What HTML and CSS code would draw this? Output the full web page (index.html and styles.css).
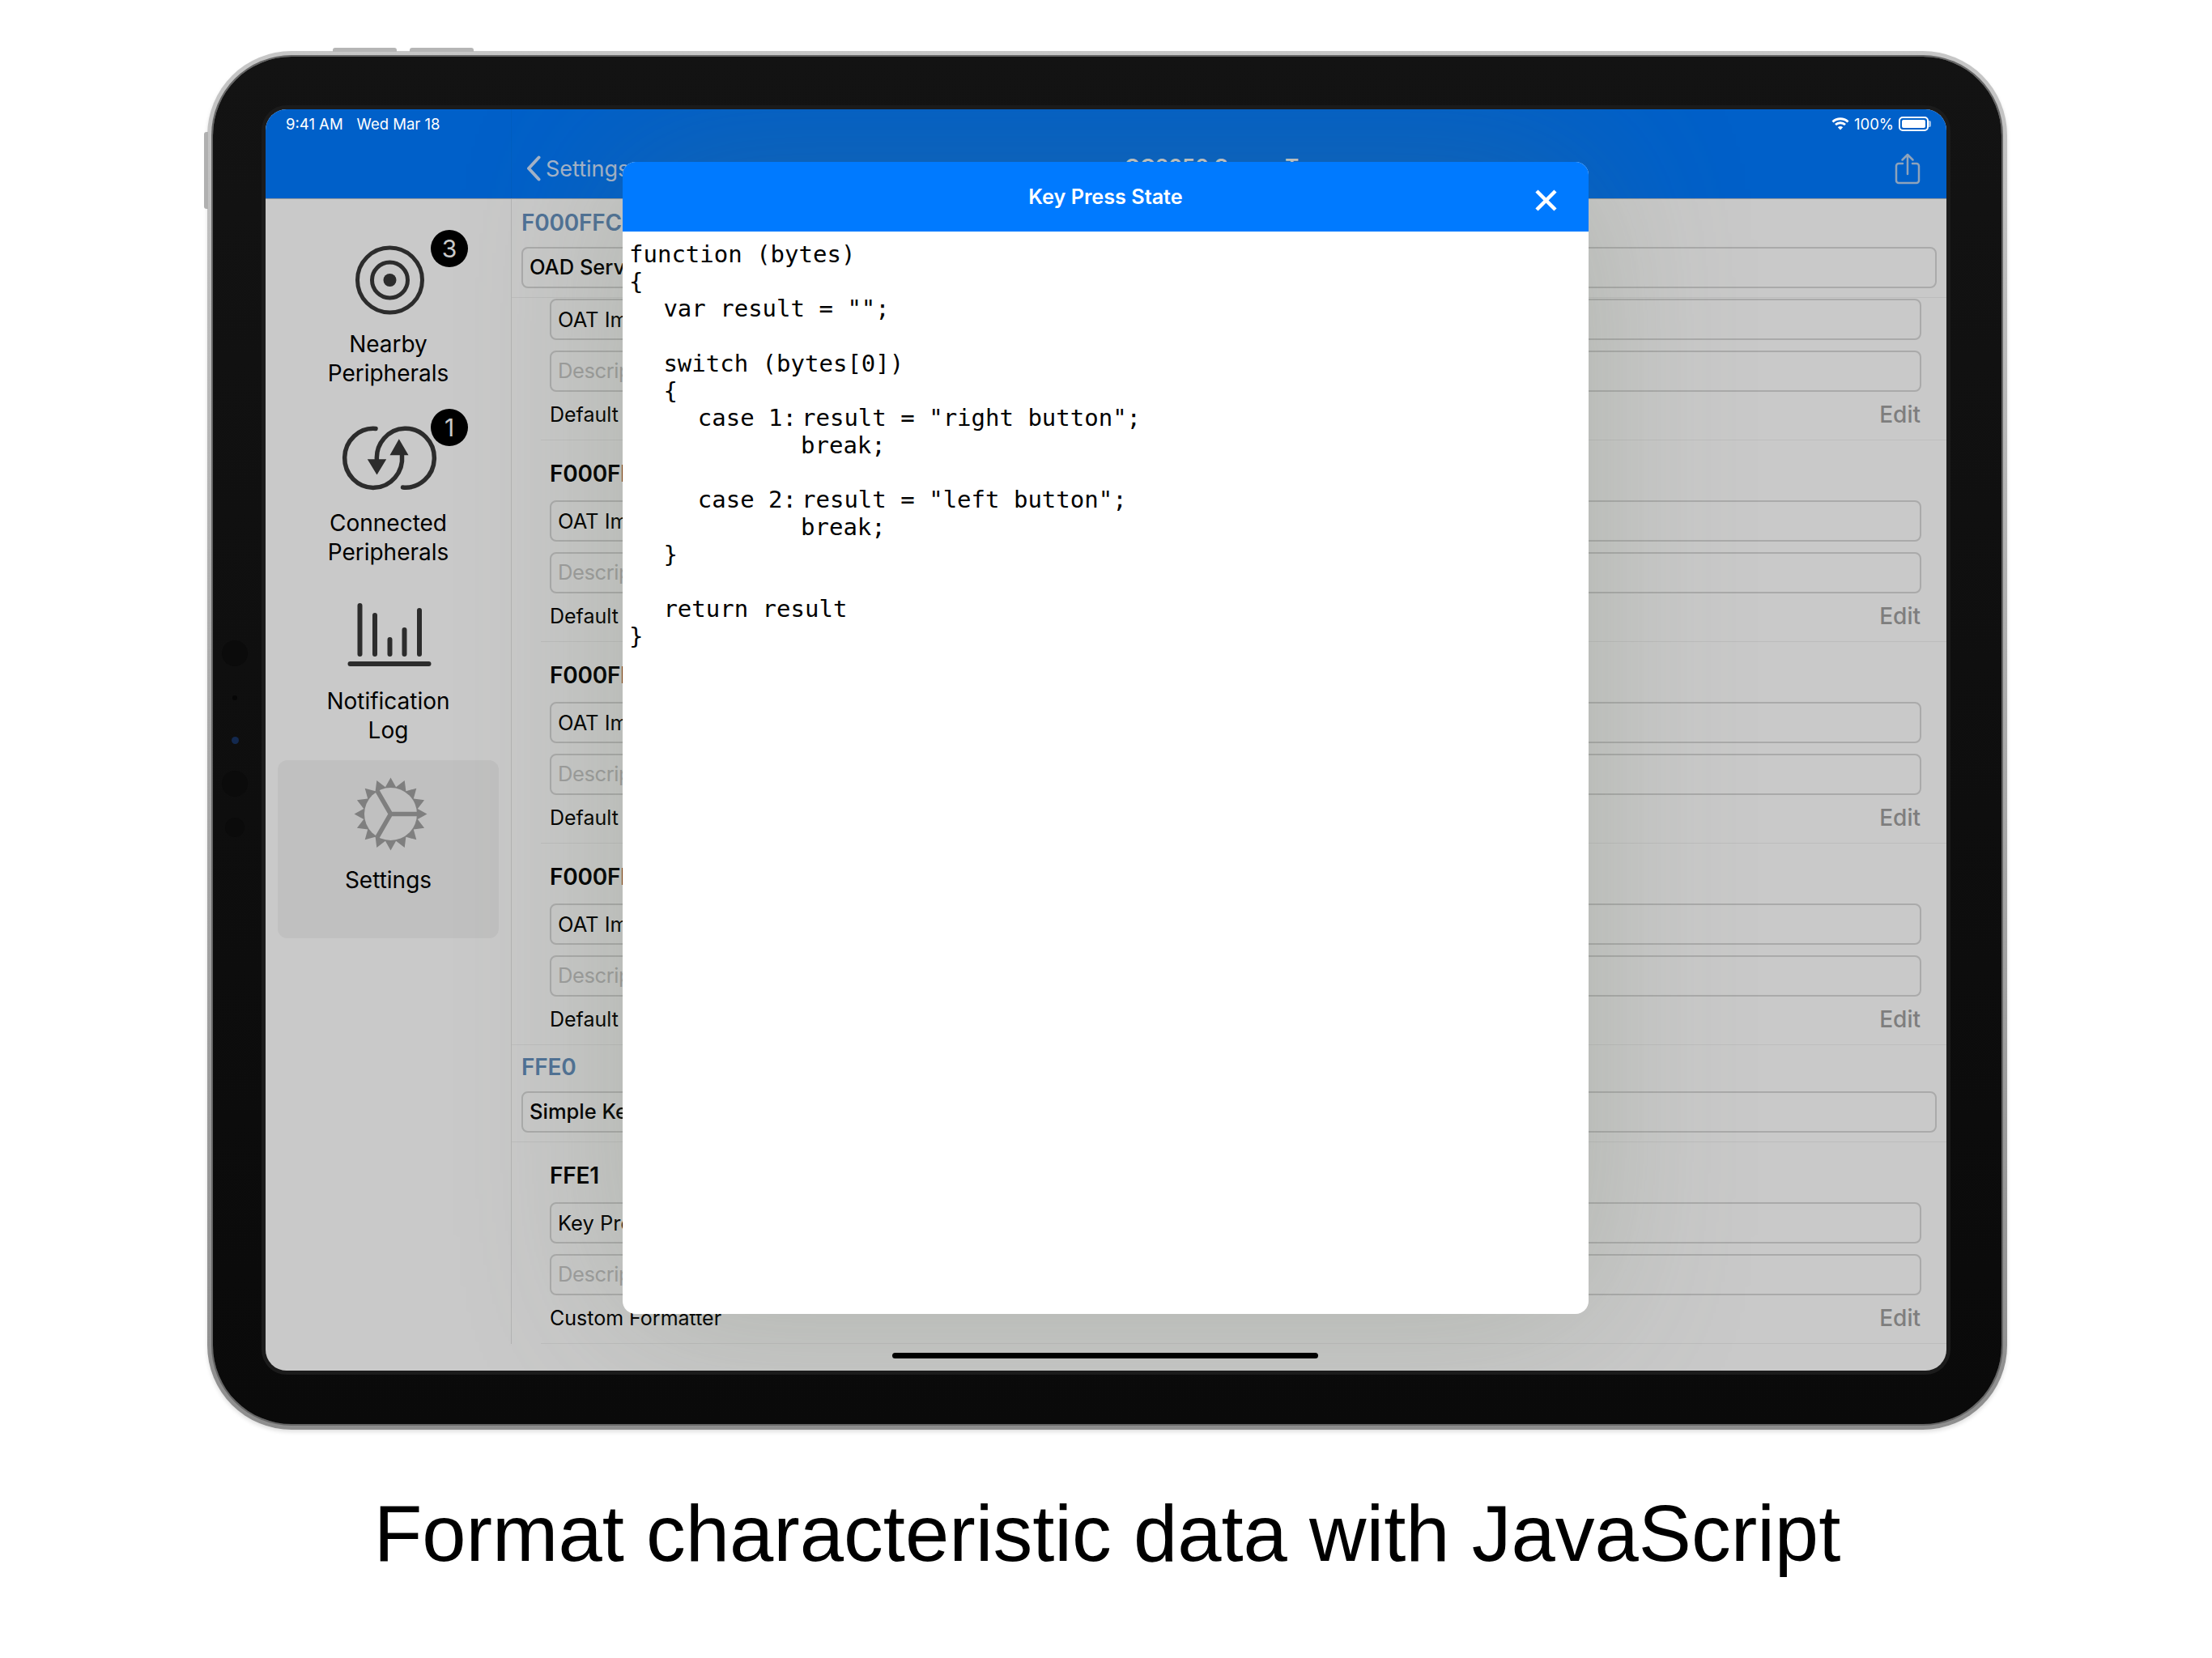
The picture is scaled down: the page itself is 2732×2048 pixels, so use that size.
FILE: index.html
```html
<!DOCTYPE html>
<html lang="en">
<head>
<meta charset="utf-8">
<title>Format characteristic data with JavaScript</title>
<link rel="stylesheet" href="styles.css">
</head>
<body>
<main class="page">
  <div class="device">
    <span class="hw-top hw-top-a"></span>
    <span class="hw-top hw-top-b"></span>
    <span class="hw-side"></span>
    <div class="bezel">
      <div class="sensors">
        <span class="sensor sensor-lg"></span>
        <span class="sensor sensor-dot"></span>
        <span class="sensor sensor-cam"></span>
        <span class="sensor sensor-lg2"></span>
        <span class="sensor sensor-md"></span>
      </div>
      <div class="screen">
        <header class="nav">
          <div class="nav-left"></div>
          <div class="nav-right">
            <div class="back">
              <svg class="chevron" viewBox="0 0 18 32"><path d="M15.5 2.5 3 16l12.500 13.500"/></svg>
              <span>Settings</span>
            </div>
            <div class="nav-title">CC2650 SensorTag</div>
            <svg class="share" viewBox="2340 187 32 40"><path d="M2350 201h-5a3 3 0 0 0-3 3v18a3 3 0 0 0 3 3h22a3 3 0 0 0 3-3v-18a3 3 0 0 0-3-3h-5M2356 190v24M2349.500 196.500l6.500-6.500 6.500 6.500"/></svg>
          </div>
        </header>
        <div class="content">
          <aside class="sidebar">
            <div class="tab">
              <svg class="tab-icon" viewBox="399.5 298 160 96">
                <circle class="stroke" cx="481" cy="346" r="40"/>
                <circle class="stroke" cx="481" cy="346" r="22"/>
                <circle class="solid" cx="481" cy="346" r="8"/>
              </svg>
              <div class="tab-label">Nearby<br>Peripherals</div>
              <span class="badge">3</span>
            </div>
            <div class="tab">
              <svg class="tab-icon" viewBox="399.5 518.500 160 96">
                <path class="stroke round thick" d="M463.500 529A35.500 36.500 0 1 0 496 562"/>
                <path class="stroke round thick" d="M497 601.500A35.500 36.500 0 1 0 465 568.500"/>
                <path class="solid" d="M492.300 541.700 504 561.700H481ZM453.300 566.700H476.700L465 586Z"/>
              </svg>
              <div class="tab-label">Connected<br>Peripherals</div>
              <span class="badge">1</span>
            </div>
            <div class="tab">
              <svg class="tab-icon" viewBox="399.5 739 160 96">
                <path class="stroke round bars" d="M444 748v60M462.500 760v48M481 790v18M499 778v30M517.500 754v54M432 820h97"/>
              </svg>
              <div class="tab-label">Notification<br>Log</div>
            </div>
            <div class="tab tab-active">
              <svg class="tab-icon" viewBox="399.5 959.500 160 96">
                <g transform="translate(482 1005)">
                  <polygon class="gear" points="45,0 33.300,6.600 41.600,17.200 28.300,18.900 31.800,31.800 18.900,28.300 17.200,41.600 6.600,33.300 0,45 -6.600,33.300 -17.200,41.600 -18.900,28.300 -31.800,31.800 -28.300,18.900 -41.600,17.200 -33.300,6.600 -45,0 -33.300,-6.600 -41.600,-17.200 -28.300,-18.900 -31.800,-31.800 -18.900,-28.300 -17.200,-41.600 -6.600,-33.300 0,-45 6.600,-33.300 17.200,-41.600 18.900,-28.300 31.800,-31.800 28.300,-18.900 41.600,-17.200 33.300,-6.600"/>
                  <circle class="gear-face" r="32.500"/>
                  <path class="gear-spokes" d="M0 0H33M0 0-16.500-28.500M0 0-16.500 28.500"/>
                </g>
              </svg>
              <div class="tab-label">Settings</div>
            </div>
          </aside>
          <section class="list">
            <div class="service service-first">
              <h2 class="service-id">F000FFC0</h2>
              <div class="field field-strong">OAD Service</div>
            </div>
            <div class="char char-bare">
              <div class="field">OAT Image Identify</div>
              <div class="field field-hint">Description</div>
              <div class="meta"><span>Default</span><span class="edit">Edit</span></div>
            </div>
            <div class="char">
              <h3 class="char-id">F000FFC2</h3>
              <div class="field">OAT Image Block</div>
              <div class="field field-hint">Description</div>
              <div class="meta"><span>Default</span><span class="edit">Edit</span></div>
            </div>
            <div class="char">
              <h3 class="char-id">F000FFC3</h3>
              <div class="field">OAT Image Count</div>
              <div class="field field-hint">Description</div>
              <div class="meta"><span>Default</span><span class="edit">Edit</span></div>
            </div>
            <div class="char char-last">
              <h3 class="char-id">F000FFC4</h3>
              <div class="field">OAT Image Status</div>
              <div class="field field-hint">Description</div>
              <div class="meta"><span>Default</span><span class="edit">Edit</span></div>
            </div>
            <div class="service">
              <h2 class="service-id">FFE0</h2>
              <div class="field field-strong">Simple Keys Service</div>
            </div>
            <div class="char">
              <h3 class="char-id">FFE1</h3>
              <div class="field">Key Press State</div>
              <div class="field field-hint">Description</div>
              <div class="meta"><span>Custom Formatter</span><span class="edit">Edit</span></div>
            </div>
          </section>
        </div>
        <div class="scrim"></div>
        <div class="status">
          <div class="status-time"><span>9:41 AM</span><span>Wed Mar 18</span></div>
          <div class="status-right">
            <svg class="wifi" viewBox="0 0 22 16"><path class="wifi-arc" d="M1.500 5.500a14 14 0 0 1 19 0M5 9a9 9 0 0 1 12 0"/><path class="wifi-dot" d="M11 15.500 7.800 12.200a4.600 4.600 0 0 1 6.400 0Z"/></svg>
            <span>100%</span>
            <div class="battery"><span class="battery-fill"></span></div>
          </div>
        </div>
        <div class="modal">
          <div class="modal-head">
            <span class="modal-title">Key Press State</span>
            <svg class="modal-close" viewBox="0 0 27 27"><path d="M2 2 25 25M25 2 2 25"/></svg>
          </div>
          <pre class="code">function (bytes)
{
	var result = "";

	switch (bytes[0])
	{
		case 1:<span class="tab-gap"></span>result = "right button";
					break;

		case 2:<span class="tab-gap"></span>result = "left button";
					break;
	}

	return result
}</pre>
        </div>
        <span class="home"></span>
      </div>
    </div>
  </div>
  <p class="caption">Format characteristic data with JavaScript</p>
</main>
</body>
</html>
```

FILE: styles.css
```css
* { box-sizing: border-box; }
html, body { margin: 0; padding: 0; background: #fff; }
.page { width: 2732px; height: 2048px; padding-top: 63px; overflow: hidden; font-family: Inter, "Liberation Sans", sans-serif; color: #000; }

.device { position: relative; width: 2223px; height: 1703px; margin-left: 256px; padding: 7px; border-radius: 104px; background: linear-gradient(#c6c6c6, #8e8e8e); box-shadow: 0 3px 5px rgba(0,0,0,.12); }
.hw-top { position: absolute; top: -4px; width: 79px; height: 5px; border-radius: 3px 3px 0 0; background: #b5b5b5; }
.hw-top-a { left: 155px; }
.hw-top-b { left: 250px; }
.hw-side { position: absolute; left: -4px; top: 100px; width: 5px; height: 95px; border-radius: 3px 0 0 3px; background: #b0b0b0; }

.bezel { position: relative; height: 100%; padding: 65px 68px 66px 65px; border-radius: 97px; background: linear-gradient(#131313, #0a0a0a); box-shadow: 0 0 0 2px #666; }
.sensors { position: absolute; left: 11px; top: 721px; width: 32px; display: flex; flex-direction: column; align-items: center; }
.sensor { display: block; border-radius: 50%; background: #0b0b0b; }
.sensor-lg { width: 32px; height: 32px; }
.sensor-dot { width: 6px; height: 6px; margin-top: 36px; background: #060606; }
.sensor-cam { width: 9px; height: 9px; margin-top: 45px; background: #13294f; }
.sensor-lg2 { width: 32px; height: 32px; margin-top: 33px; }
.sensor-md { width: 24px; height: 24px; margin-top: 26px; }

.screen { position: relative; height: 100%; border-radius: 26px; overflow: hidden; background: #fff; box-shadow: 0 0 0 5px #1b1b1b; }

.nav { display: flex; height: 111px; background: #007aff; border-bottom: 1px solid #c8c8c8; }
.nav-left { width: 303px; }
.nav-right { flex: 1; display: grid; grid-template-columns: 1fr auto 1fr; align-items: center; padding: 36px 32px 0 18px; border-left: 1px solid #0076f4; color: #d2e4ff; }
.back { display: flex; align-items: center; gap: 6px; font-size: 27px; }
.chevron { width: 18px; height: 32px; }
.chevron path { fill: none; stroke: currentColor; stroke-width: 4; stroke-linecap: round; stroke-linejoin: round; }
.nav-title { margin-bottom: 6px; font-size: 26px; font-weight: 600; color: #fff; }
.share { justify-self: end; width: 32px; height: 40px; }
.share path { fill: none; stroke: #b4cfee; stroke-width: 2.5; stroke-linecap: round; stroke-linejoin: round; }

.content { display: grid; grid-template-columns: 303px 1fr; align-items: start; }
.sidebar { padding: 31px 15px 0; }
.tab { position: relative; height: 220.5px; padding-top: 21px; border-radius: 12px; text-align: center; }
.tab-active { background: #f4f4f4; }
.tab-icon { display: block; width: 160px; height: 96px; margin: 0 auto 13px; }
.stroke { fill: none; stroke: #383838; stroke-width: 5; }
.thick { stroke-width: 5.5; }
.round { stroke-linecap: round; }
.bars { stroke-width: 6; }
.solid { fill: #383838; }
.gear { fill: #a2a2a2; }
.gear-face { fill: #f4f4f4; }
.gear-spokes { fill: none; stroke: #a2a2a2; stroke-width: 5.5; }
.tab-label { font-size: 28px; line-height: 36px; }
.badge { position: absolute; left: 189px; top: 7px; width: 46px; height: 46px; border-radius: 50%; background: #000; color: #fff; font-size: 30px; line-height: 46px; text-align: center; }

.list { border-left: 1px solid #e3e3e3; min-width: 0; }
.service { padding: 0 12px 11px 12px; border-bottom: 1px solid #f0f0f0; }
.service-first { padding-top: 2px; }
.service-id { margin: 0; height: 57px; font-size: 28px; line-height: 55px; font-weight: 600; letter-spacing: -.2px; color: #6590bf; }
.field { display: flex; align-items: center; height: 51px; padding: 0 8px; border: 2px solid #d8d8d8; border-radius: 8px; font-size: 25.500px; white-space: nowrap; overflow: hidden; }
.field-strong { padding-bottom: 2px; font-weight: 500; }
.field-hint { margin-top: 13px; padding-bottom: 2px; color: #c8c8c8; letter-spacing: -.4px; }

.char { margin-left: 36px; padding: 0 31px 0 11px; border-bottom: 1px solid #f0f0f0; }
.char-bare { padding-top: 1px; }
.char-last { margin-left: 0; padding-left: 47px; }
.char-id { margin: 0; padding: 24px 0 16px; font-size: 28px; line-height: 34px; font-weight: 600; letter-spacing: -.2px; }
.meta { display: flex; justify-content: space-between; height: 59px; padding-top: 10px; font-size: 25px; line-height: 36px; }
.edit { margin-right: 1px; color: #a0a0a0; font-size: 28px; font-weight: 500; }

.scrim { position: absolute; inset: 0; background: rgba(0,0,0,.21); }
.status { position: absolute; left: 25px; right: 22px; top: 8px; display: flex; justify-content: space-between; align-items: center; height: 20px; color: #fff; font-size: 18.500px; }
.status-time { display: flex; gap: 17px; }
.status-right { display: flex; align-items: center; gap: 6px; }
.wifi { width: 22px; height: 16px; }
.wifi-arc { fill: none; stroke: #fff; stroke-width: 3; }
.wifi-dot { fill: #fff; }
.battery { position: relative; width: 37px; height: 18px; padding: 2px; border: 2px solid #fff; border-radius: 5px; }
.battery::after { content: ""; position: absolute; right: -5px; top: 3px; width: 3px; height: 8px; border-radius: 0 2px 2px 0; background: rgba(255,255,255,.6); }
.battery-fill { display: block; height: 100%; border-radius: 2px; background: #fff; }

.modal { position: absolute; left: 441px; top: 65px; width: 1193px; height: 1423px; border-radius: 16px; background: #fff; box-shadow: 0 0 200px rgba(100,115,90,.26); }
.modal-head { position: relative; display: flex; align-items: center; justify-content: center; height: 86px; border-radius: 16px 16px 0 0; background: #007aff; }
.modal-title { font-size: 25.200px; font-weight: 600; color: #fff; }
.modal-close { position: absolute; right: 39px; top: 34px; width: 27px; height: 27px; }
.modal-close path { fill: none; stroke: #fff; stroke-width: 4.500; }
.code { margin: 0; padding: 12px 0 0 8px; font-family: "DejaVu Sans Mono", monospace; font-size: 29px; line-height: 33.700px; tab-size: 42.400px; color: #000; }
.tab-gap { display: inline-block; width: 6px; }

.home { position: absolute; left: 774px; bottom: 15px; width: 526px; height: 7px; border-radius: 4px; background: #000; }

.caption { margin: 74px 0 0 3px; text-align: center; font-family: "Liberation Sans", Arial, sans-serif; font-size: 97.600px; line-height: 110px; color: #000; }
```
